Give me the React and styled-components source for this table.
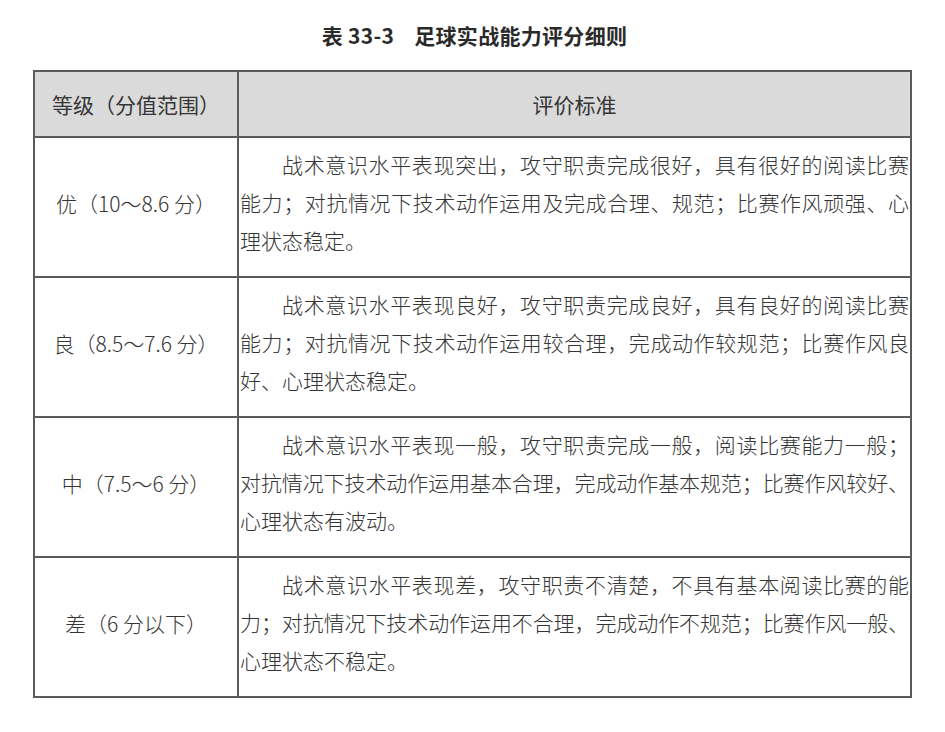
import React from 'react'
import styled, { createGlobalStyle } from 'styled-components'

const GlobalStyle = createGlobalStyle`
  html, body {
    margin: 0;
    padding: 0;
    background: #fff;
  }
  body {
    font-family: "Noto Sans CJK SC", "Noto Sans", sans-serif;
    color: #353535;
  }
`

const Page = styled.div`
  width: 945px;
  height: 732px;
  overflow: hidden;
  background: #fff;
`

const Title = styled.h1`
  margin: 0;
  height: 70px;
  display: flex;
  align-items: center;
  justify-content: center;
  padding-left: 4px;
  font-size: 21px;
  font-weight: 700;
  color: #2a2a2a;
  letter-spacing: 0.3px;
`

const TitleGap = styled.span`
  display: inline-block;
  width: 20px;
`

const Table = styled.table`
  margin-left: 33px;
  width: 879px;
  border-collapse: collapse;
  table-layout: fixed;
  border: 2px solid #5a5a5a;
`

const HeadCell = styled.th`
  height: 64px;
  background: #dadada;
  border: 2px solid #5a5a5a;
  font-weight: 400;
  font-size: 21px;
  color: #353535;
  text-align: center;
  padding: 0;
  width: ${p => p.$w || 'auto'};
`

const GradeCell = styled.td`
  height: 130px;
  border: 2px solid #5a5a5a;
  text-align: center;
  vertical-align: middle;
  font-size: 21px;
  font-weight: 300;
  padding: 0 0 8px 0;
  white-space: nowrap;
`

const TextCell = styled.td`
  border: 2px solid #5a5a5a;
  vertical-align: middle;
  padding: 0 0 10px 1px;
  font-size: 21px;
  font-weight: 300;
  line-height: 38px;
`

const Line = styled.div`
  white-space: nowrap;
  text-indent: ${p => (p.$first ? '2em' : '0')};
  text-align: justify;
  text-align-last: ${p => (p.$last ? 'left' : 'justify')};
  letter-spacing: ${p => (p.$tight ? '-0.12px' : '0')};
  width: 669px;
`

const rows = [
  {
    grade: '优（10〜8.6 分）',
    lines: [
      '战术意识水平表现突出，攻守职责完成很好，具有很好的阅读比赛',
      '能力；对抗情况下技术动作运用及完成合理、规范；比赛作风顽强、心',
      '理状态稳定。',
    ],
  },
  {
    grade: '良（8.5〜7.6 分）',
    lines: [
      '战术意识水平表现良好，攻守职责完成良好，具有良好的阅读比赛',
      '能力；对抗情况下技术动作运用较合理，完成动作较规范；比赛作风良',
      '好、心理状态稳定。',
    ],
  },
  {
    grade: '中（7.5〜6 分）',
    lines: [
      '战术意识水平表现一般，攻守职责完成一般，阅读比赛能力一般；',
      '对抗情况下技术动作运用基本合理，完成动作基本规范；比赛作风较好、',
      '心理状态有波动。',
    ],
  },
  {
    grade: '差（6 分以下）',
    lines: [
      '战术意识水平表现差，攻守职责不清楚，不具有基本阅读比赛的能',
      '力；对抗情况下技术动作运用不合理，完成动作不规范；比赛作风一般、',
      '心理状态不稳定。',
    ],
  },
]

export default function App() {
  return (
    <Page>
      <GlobalStyle />
      <Title>
        表 33-3<TitleGap />足球实战能力评分细则
      </Title>
      <Table>
        <thead>
          <tr>
            <HeadCell $w="202px">等级（分值范围）</HeadCell>
            <HeadCell>评价标准</HeadCell>
          </tr>
        </thead>
        <tbody>
          {rows.map(r => (
            <tr key={r.grade}>
              <GradeCell>{r.grade}</GradeCell>
              <TextCell>
                {r.lines.map((l, i) => (
                  <Line
                    key={i}
                    $first={i === 0}
                    $last={i === r.lines.length - 1}
                    $tight={l.length >= 32}
                  >
                    {l}
                  </Line>
                ))}
              </TextCell>
            </tr>
          ))}
        </tbody>
      </Table>
    </Page>
  )
}
